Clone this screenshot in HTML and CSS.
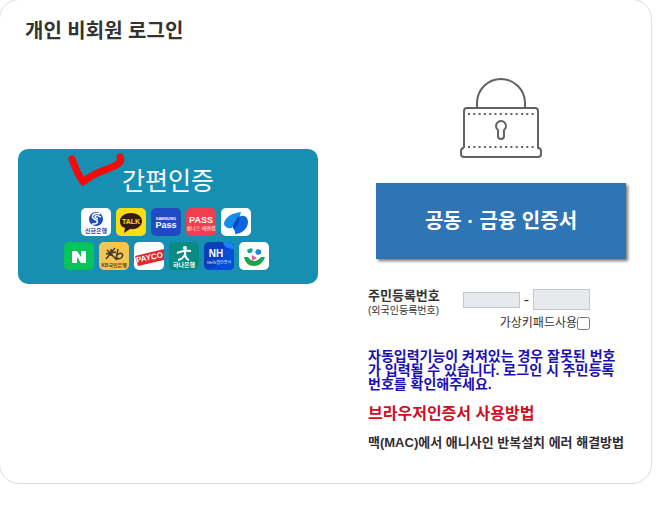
FILE: index.html
```html
<!DOCTYPE html>
<html lang="ko">
<head>
<meta charset="utf-8">
<title>개인 비회원 로그인</title>
<link rel="stylesheet" href="styles.css">
</head>
<body>
<main class="card">
  <h1 class="title">개인 비회원 로그인</h1>
  <div class="columns">
    <button type="button" class="simple">
      <svg class="check" viewBox="0 0 60 40" aria-hidden="true"><path d="M5 9C8 17 11 25 16 32C30 20 40 21 51 14Q55 11 53 7" fill="none" stroke="#f80808" stroke-width="7" stroke-linecap="round" stroke-linejoin="round"/></svg>
      <span class="simple-title">간편인증</span>
      <span class="providers">
        <span class="provider-row">
          <svg class="tile white" viewBox="0 0 30 28"><circle cx="15" cy="11" r="7" fill="#174bc0"/><path d="M19 6C13 4 9 8 13 11C18 13 18 16 11 16M20 9C13 6 12 9 17 11" fill="none" stroke="#fff" stroke-width="1.5"/><text x="15" y="25" class="t6 bold" fill="#2347ad">신한은행</text></svg>
          <svg class="tile yellow" viewBox="0 0 30 28"><path d="M15 5C8 5 4 9 4 13C4 17 6 19 9 20L8 25L14 21C21 22 26 18 26 13C26 9 22 5 15 5Z" fill="#351b18"/><text x="15" y="16" class="t7 bold" fill="#fee500">TALK</text></svg>
          <svg class="tile navy" viewBox="0 0 30 28"><text x="15" y="12" class="t4 bold" fill="#fff">SAMSUNG</text><text x="15" y="20" class="t9 bold" fill="#fff">Pass</text></svg>
          <svg class="tile red" viewBox="0 0 30 28"><text x="15" y="15" class="t9 bold" fill="#fff">PASS</text><text x="15" y="22" class="t5" fill="#fff">쉽니즈 에엔캠</text></svg>
          <svg class="tile white" viewBox="0 0 30 28"><path d="M3 15C5 8 12 5 20 4L18 11L11 20C7 21 3 19 3 15Z" fill="#168bea"/><path d="M17 9L20 8C24 7 27 10 27 14C27 20 21 26 14 26C15 22 12 22 12 19C12 15 16 14 17 9Z" fill="#0b66e6"/><path d="M18 8C19 15 16 18 12 21C12 16 14 13 18 8Z" fill="#0747b7"/></svg>
        </span>
        <span class="provider-row">
          <svg class="tile green" viewBox="0 0 30 28"><path d="M8 21V9H13L17 15V9H22V21H17L13 15V21Z" fill="#fff"/></svg>
          <svg class="tile gold" viewBox="0 0 30 28"><path d="M8 8L18 18M16 6L7 17M12 7V14M7 12L17 10M19 7L17 17M18 13C22 9 26 13 22 16Q19 18 17 15" fill="none" stroke="#41372a" stroke-width="1.5"/><text x="15" y="25" class="t5 bold" fill="#51452e">KB국민은행</text></svg>
          <svg class="tile white" viewBox="0 0 30 28"><path d="M1 14L30 7V18L4 24Z" fill="#e3252d"/><text x="16" y="18" class="t8 bold" fill="#fff" transform="rotate(-12 16 18)">PAYCO</text></svg>
          <svg class="tile teal" viewBox="0 0 30 28"><circle cx="16" cy="6" r="2" fill="#fff"/><path d="M8 11Q15 8 22 9M16 9C17 13 14 17 9 18M16 12Q17 17 20 18" fill="none" stroke="#fff" stroke-width="2"/><text x="15" y="25" class="t6 bold" fill="#fff">하나은행</text></svg>
          <svg class="tile blue" viewBox="0 0 30 28"><path d="M20 0H30V28H0C12 26 23 17 20 0Z" fill="#064cda"/><path d="M19 0C20 5 24 7 30 7V0Z" fill="#1684f3"/><text x="12" y="15" class="t10 bold" fill="#fff">NH</text><text x="15" y="22" class="t4" fill="#d5e6ff">NH농협인증서</text></svg>
          <svg class="tile white" viewBox="0 0 30 28"><path d="M5 15H9Q15 23 22 15H26C24 21 20 24 15 24C10 24 6 21 5 15Z" fill="#19a64b"/><path d="M12 6L14 8L12 11L9 11L8 8Z" fill="#0ba5a5"/><path d="M18 7L22 8L22 12L18 13L16 10Z" fill="#2688d8"/><path d="M13 13L18 16L13 19Z" fill="#e95c9b"/></svg>
        </span>
      </span>
    </button>

    <section class="certificate">
      <svg class="lock" viewBox="0 0 84 82" fill="none" stroke="#626262" stroke-width="2" stroke-linejoin="round" aria-hidden="true">
        <path d="M18 31V26A24 24 0 0 1 66 26V31"/>
        <path d="M5 71V34Q5 31 8 31H76Q79 31 79 34V71Q82 71 82 74V77Q82 80 79 80H5Q2 80 2 77V74Q2 71 5 71"/>
        <path d="M9 37H77M9 70H77" stroke-dasharray="2 3.3"/>
        <path d="M39 53A5 5 0 1 1 45 53V59A3 3 0 0 1 39 59Z"/>
      </svg>
      <button type="button" class="cert-button">공동 · 금융 인증서</button>
      <form class="identity">
        <label class="identity-label" for="front"><strong>주민등록번호</strong><span>(외국인등록번호)</span></label>
        <div class="identity-fields">
          <div class="numbers">
            <input class="number front" id="front" type="text" inputmode="numeric" maxlength="6">
            <span>-</span>
            <input class="number back" type="password" aria-label="주민등록번호 뒷자리" maxlength="7">
          </div>
          <label class="keypad">가상키패드사용<input type="checkbox"></label>
        </div>
      </form>
      <p class="notice">자동입력기능이 켜져있는 경우 잘못된 번호가 입력될 수 있습니다. 로그인 시 주민등록번호를 확인해주세요.</p>
      <a class="browser-link" href="#">브라우저인증서 사용방법</a>
      <a class="mac-link" href="#">맥(MAC)에서 애니사인 반복설치 에러 해결방법</a>
    </section>
  </div>
</main>
</body>
</html>
```
FILE: styles.css
```css
* {
  box-sizing: border-box;
}

body {
  margin: 0;
  background: #fff;
  color: #333;
  font-family: "Liberation Sans", "Noto Sans CJK KR", sans-serif;
}

button,
input {
  font: inherit;
}

.card {
  margin: -1px 11px 28px -1px;
  padding: 16px 20px 31px 18px;
  border: 1px solid #dcdcdc;
  border-radius: 20px;
}

.title {
  margin: 0 0 31px 7px;
  font-size: 20px;
  line-height: 30px;
}

.columns {
  display: grid;
  grid-template-columns: minmax(0, 300px) minmax(0, 260px);
  gap: 50px;
  align-items: start;
}

.simple {
  position: relative;
  margin: 72px 0 0;
  padding: 16px 4px 14px 0;
  border: 0;
  border-radius: 10px;
  background: #168fb2;
  color: #fff;
}

.check {
  position: absolute;
  left: 49px;
  top: 1px;
  width: 60px;
  height: 40px;
}

.simple-title {
  display: block;
  margin-bottom: 11px;
  padding-left: 4px;
  font-size: 25px;
  line-height: 32px;
}

.providers {
  display: grid;
  gap: 6px;
}

.provider-row {
  display: flex;
  justify-content: center;
  gap: 5px;
}

.tile {
  width: 30px;
  height: 28px;
  border-radius: 5px;
  text-anchor: middle;
}

.white { background: #fff; }
.yellow { background: #f7dc16; }
.navy { background: #204bc0; }
.red { background: #f13d50; }
.green { background: #07c45a; }
.gold { background: #f5c64f; }
.teal { background: #078c84; }
.blue { background: #0a3fb8; }

.t4 { font-size: 4px; }
.t5 { font-size: 5px; }
.t6 { font-size: 6px; }
.t7 { font-size: 7px; }
.t8 { font-size: 8px; }
.t9 { font-size: 9px; }
.t10 { font-size: 10px; }
.bold { font-weight: bold; }

.certificate {
  display: flex;
  flex-direction: column;
}

.lock {
  width: 84px;
  height: 82px;
  margin: 0 0 24px 91px;
}

.cert-button {
  height: 76px;
  margin: 0 2px 0 8px;
  padding: 0 0 4px;
  border: 0;
  background: #2f74b5;
  box-shadow: 2px 2px 3px #777;
  color: #fff;
  font-size: 20px;
  font-weight: bold;
}

.identity {
  display: flex;
  justify-content: space-between;
  margin: 28px 38px 18px 0;
}

.identity-label {
  display: flex;
  flex-direction: column;
  font-size: 10px;
  line-height: 12px;
  white-space: nowrap;
}

.identity-label strong {
  font-size: 13px;
  line-height: 18px;
}

.identity-fields {
  display: flex;
  flex-direction: column;
  align-items: flex-end;
  gap: 5px;
  padding-top: 2px;
}

.numbers {
  display: flex;
  align-items: center;
  gap: 4px;
  line-height: 20px;
}

.number {
  width: 57px;
  padding: 0 4px;
  border: 1px solid #bfc6d4;
  border-radius: 0;
  background: #e8e9ee;
}

.front { height: 16px; }
.back { height: 21px; }

.keypad {
  display: flex;
  align-items: center;
  font-size: 12px;
  line-height: 16px;
  white-space: nowrap;
}

.keypad input {
  width: 13px;
  height: 13px;
  margin: 0;
}

.notice {
  margin: 0 10px 12px 0;
  color: #1a10b5;
  font-size: 14px;
  font-weight: bold;
  line-height: 14px;
  word-break: break-all;
}

.browser-link,
.mac-link {
  text-decoration: none;
  white-space: nowrap;
}

.browser-link {
  margin-bottom: 9px;
  color: #d00d23;
  font-size: 16px;
  font-weight: bold;
  line-height: 22px;
}

.mac-link {
  color: #342b31;
  font-size: 13px;
  font-weight: bold;
  line-height: 18px;
}
```
